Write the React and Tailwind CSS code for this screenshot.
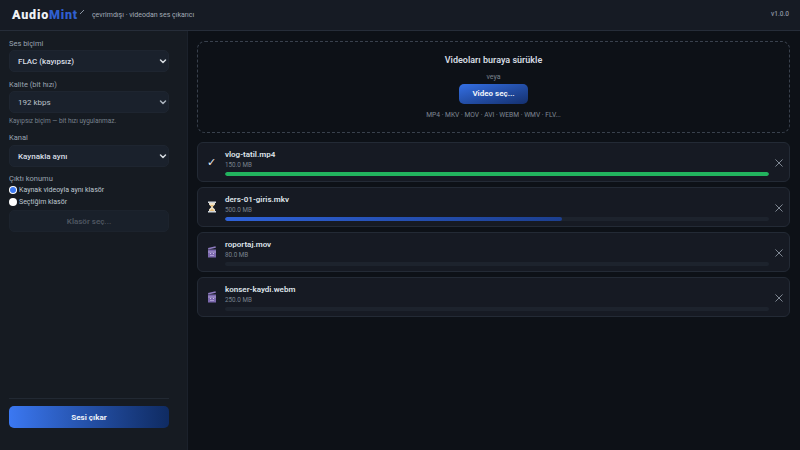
const font = { fontFamily: 'Roboto, sans-serif' };

function Hourglass() {
  return (
    <svg width="10" height="12" viewBox="0 0 10 12">
      <rect x="1" y="0.5" width="8" height="1.5" fill="#cfd5dc" />
      <rect x="1" y="10" width="8" height="1.5" fill="#cfd5dc" />
      <path d="M2 2h6v1.500L5.600 6 8 8.500V10H2V8.500L4.400 6 2 3.500z" fill="#eee3cb" />
      <path d="M3 4h4L5 6zM2.600 10 5 7.500 7.400 10z" fill="#e6bb72" />
    </svg>
  );
}

function Clapper() {
  return (
    <svg width="10" height="12" viewBox="0 0 10 12">
      <path d="M1 2 8.500.3l.4 1.500L1.400 3.500z" fill="#8f7cc0" />
      <rect x="1" y="3.500" width="8" height="8" fill="#7b68ad" />
      <rect x="1" y="5.500" width="8" height="1" fill="#a99bd0" />
      <rect x="3" y="7" width="1" height="1" fill="#c7bde0" />
      <rect x="6" y="7" width="1" height="1" fill="#c7bde0" />
      <rect x="3" y="9" width="4" height="1" fill="#a99bd0" />
    </svg>
  );
}

function Chevron({ dim }) {
  return (
    <svg width="8" height="8" viewBox="0 0 16 16" className={dim ? "text-[#aab2bc]" : "text-[#d5dae0]"}>
      <path d="M3 6l5 5 5-5" fill="none" stroke="currentColor" strokeWidth="3" strokeLinecap="round" strokeLinejoin="round" />
    </svg>
  );
}

function Field({ label, value, bright, gap = "mb-[1px]" }) {
  return (
    <div className="flex flex-col">
      <div className={"text-[7.500px] leading-[10px] text-[#9aa4b0] " + gap}>{label}</div>
      <div className="h-[22px] rounded-[5px] bg-[#1a212c] border border-[#1e2530] flex items-center justify-between pl-[8px] pr-[1.500px]">
        <span className={"text-[8px] pt-[1px] " + (bright ? "font-medium text-[#d8dde4]" : "text-[#b9c0c9]")}>{value}</span>
        <Chevron dim={!bright} />
      </div>
    </div>
  );
}

function Card({ icon, name, size, pct, color }) {
  return (
    <div className="h-[40px] rounded-[6px] bg-[#161a23] border border-[#232a35] flex items-center pl-[9px] pr-[6px]">
      <div className="w-[18px] flex justify-start shrink-0">{icon}</div>
      <div className="flex-1 flex flex-col min-w-0">
        <div className="text-[8px] leading-[10px] pt-[1px] box-content font-semibold text-[#dfe4ea]">{name}</div>
        <div className="text-[6.300px] leading-[9px] mt-[1px] text-[#79828e]">{size}</div>
        <div className="h-[4px] rounded-full bg-[#1d232d] mt-[2px] overflow-hidden">
          <div className="h-full rounded-full" style={{ width: pct + "%", background: color }} />
        </div>
      </div>
      <div className="w-[14px] flex justify-end shrink-0 pt-[1px]">
        <svg width="8" height="8" viewBox="0 0 8 8">
          <path d="M.7.7l6.600 6.600M7.300.7.700 7.300" stroke="#7f8792" strokeWidth="1" strokeLinecap="round" />
        </svg>
      </div>
    </div>
  );
}

export default function App() {
  return (
    <div style={font} className="w-[800px] h-[450px] flex flex-col bg-[#0d1117] overflow-hidden">
      <header className="h-[31px] shrink-0 bg-[#161b24] border-b border-[#262d39] flex items-center justify-between pl-[12px] pr-[11px]">
        <div className="flex items-center">
          <span className="text-[12.500px] font-black tracking-[0.8px] text-[#eef1f5]">Audio</span>
          <span className="text-[12.500px] font-black tracking-[0.8px] text-[#2f5fd0]">Mint</span>
          <svg width="6" height="6" viewBox="0 0 6 6" className="ml-[1px] mb-[6px]"><path d="M1 5 5 1" stroke="#8b95a3" strokeWidth="1" /></svg>
          <span className="ml-[7px] text-[7px] text-[#a2abb6]">çevrimdışı · videodan ses çıkarıcı</span>
        </div>
        <span className="text-[6.500px] font-medium text-[#8b93a0]">v1.0.0</span>
      </header>
      <div className="flex-1 flex min-h-0">
        <aside className="w-[188px] shrink-0 bg-[#161b22] border-r border-[#1b212b] flex flex-col pt-[8px] pb-[22px] pl-[9px] pr-[18px]">
          <div className="flex flex-col">
            <Field label="Ses biçimi" value="FLAC (kayıpsız)" bright />
            <div className="h-[8px]" />
            <Field label="Kalite (bit hızı)" value="192 kbps" />
            <div className="text-[6.500px] leading-[9px] mt-[4px] text-[#79828e]">Kayıpsız biçim — bit hızı uygulanmaz.</div>
            <div className="h-[7px]" />
            <Field label="Kanal" value="Kaynakla aynı" bright gap="mb-[2px]" />
            <div className="text-[7.500px] leading-[10px] mt-[7px] text-[#9aa4b0]">Çıktı konumu</div>
            <div className="flex items-center h-[12px]">
              <span className="w-[8px] h-[8px] rounded-full bg-white flex items-center justify-center mr-[2px]">
                <span className="w-[6px] h-[6px] rounded-full bg-[#3b78f2]" />
              </span>
              <span className="text-[7px] text-[#bfc6cf]">Kaynak videoyla aynı klasör</span>
            </div>
            <div className="flex items-center h-[12px]">
              <span className="w-[8px] h-[8px] rounded-full bg-white mr-[2px]" />
              <span className="text-[7px] text-[#bfc6cf]">Seçtiğim klasör</span>
            </div>
            <div className="h-[22px] mt-[2px] rounded-[5px] bg-[#19202a] border border-[#1c232d] flex items-center justify-center text-[8px] pt-[1px] font-semibold text-[#4e5661]">Klasör seç...</div>
          </div>
          <div className="mt-auto border-t border-[#222933] pt-[7px]">
            <div className="h-[22px] rounded-[5px] bg-gradient-to-r from-[#3b78f2] to-[#0f2b62] flex items-center justify-center text-[8px] pt-[1px] font-bold text-[#eef2f8]">Sesi çıkar</div>
          </div>
        </aside>
        <main className="flex-1 min-w-0 pt-[10px] pl-[9px] pr-[10px] flex flex-col gap-[5px]">
          <div className="h-[92px] mb-[4px] rounded-[8px] border border-dashed border-[#39414d] flex flex-col items-center pt-[12px]">
            <div className="text-[9px] leading-[13px] font-semibold text-[#d5dae1]">Videoları buraya sürükle</div>
            <div className="text-[7px] leading-[10px] mt-[5px] text-[#79828e]">veya</div>
            <div className="h-[20px] w-[69px] mt-[2px] rounded-[5px] bg-gradient-to-br from-[#3470e6] to-[#14306e] flex items-center justify-center text-[8px] font-bold text-[#eef2f8]">Video seç...</div>
            <div className="text-[6.700px] leading-[10px] mt-[6px] text-[#7f8894]">MP4 · MKV · MOV · AVI · WEBM · WMV · FLV...</div>
          </div>
          <Card icon={<span className="text-[11px] leading-none text-[#e6e9ee]" style={{ fontFamily: '"DejaVu Sans", sans-serif' }}>✓</span>} name="vlog-tatil.mp4" size="150.0 MB" pct={100} color="#22b35e" />
          <Card icon={<Hourglass />} name="ders-01-giris.mkv" size="500.0 MB" pct={62} color="linear-gradient(90deg,#2f62d8,#1c3f8f)" />
          <Card icon={<Clapper />} name="roportaj.mov" size="80.0 MB" pct={0} color="#2f62d8" />
          <Card icon={<Clapper />} name="konser-kaydi.webm" size="250.0 MB" pct={0} color="#2f62d8" />
        </main>
      </div>
    </div>
  );
}
